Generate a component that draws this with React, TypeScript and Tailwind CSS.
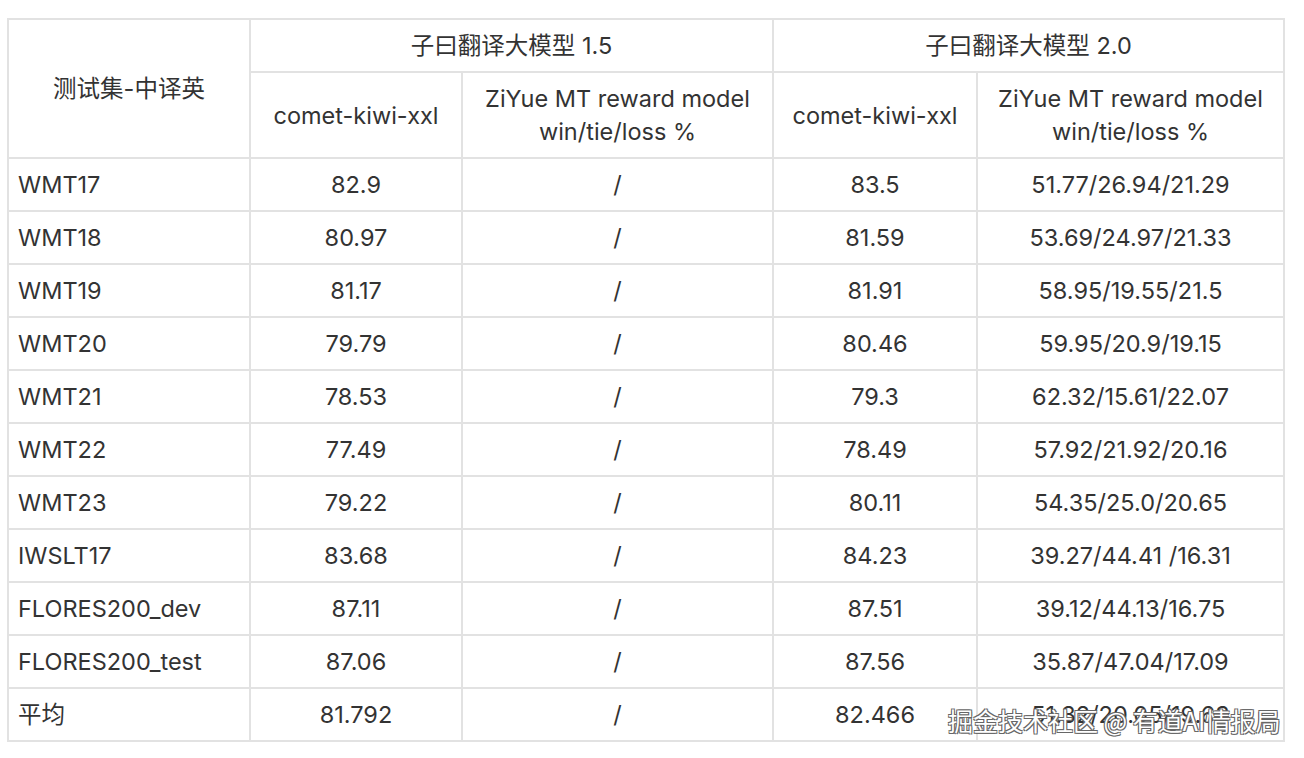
import React from 'react';

const rows: [string, string, string, string, string][] = [
  ['WMT17', '82.9', '/', '83.5', '51.77/26.94/21.29'],
  ['WMT18', '80.97', '/', '81.59', '53.69/24.97/21.33'],
  ['WMT19', '81.17', '/', '81.91', '58.95/19.55/21.5'],
  ['WMT20', '79.79', '/', '80.46', '59.95/20.9/19.15'],
  ['WMT21', '78.53', '/', '79.3', '62.32/15.61/22.07'],
  ['WMT22', '77.49', '/', '78.49', '57.92/21.92/20.16'],
  ['WMT23', '79.22', '/', '80.11', '54.35/25.0/20.65'],
  ['IWSLT17', '83.68', '/', '84.23', '39.27/44.41 /16.31'],
  ['FLORES200_dev', '87.11', '/', '87.51', '39.12/44.13/16.75'],
  ['FLORES200_test', '87.06', '/', '87.56', '35.87/47.04/17.09'],
  ['平均', '81.792', '/', '82.466', '51.32/20.05/19.63'],
];

const cell = 'border-2 border-[#e2e2e2] px-[9px] h-[53px] leading-[33px]';

export default function App() {
  return (
    <div className="relative w-[1304px] h-[758px] bg-white text-[#333] text-[23.5px] font-['Inter','Noto_Sans_CJK_SC',sans-serif]">
      <div className="pt-[18px] pl-[7px]">
        <table className="border-collapse table-fixed w-[1276px]">
          <colgroup>
            <col className="w-[242px]" />
            <col className="w-[212px]" />
            <col className="w-[311px]" />
            <col className="w-[204px]" />
            <col className="w-[307px]" />
          </colgroup>
          <thead>
            <tr>
              <th rowSpan={2} className={`${cell} font-normal text-center`}>
                测试集-中译英
              </th>
              <th colSpan={2} className={`${cell} font-normal text-center`}>
                子曰翻译大模型 1.5
              </th>
              <th colSpan={2} className={`${cell} font-normal text-center`}>
                子曰翻译大模型 2.0
              </th>
            </tr>
            <tr>
              <th className={`${cell} h-[86px] font-normal text-center`}>comet-kiwi-xxl</th>
              <th className={`${cell} h-[86px] font-normal text-center`}>
                ZiYue MT reward model
                <br />
                win/tie/loss %
              </th>
              <th className={`${cell} h-[86px] font-normal text-center`}>comet-kiwi-xxl</th>
              <th className={`${cell} h-[86px] font-normal text-center`}>
                ZiYue MT reward model
                <br />
                win/tie/loss %
              </th>
            </tr>
          </thead>
          <tbody>
            {rows.map((r) => (
              <tr key={r[0]}>
                <td className={`${cell} text-left`}>{r[0]}</td>
                <td className={`${cell} text-center`}>{r[1]}</td>
                <td className={`${cell} text-center`}>{r[2]}</td>
                <td className={`${cell} text-center`}>{r[3]}</td>
                <td className={`${cell} text-center`}>{r[4]}</td>
              </tr>
            ))}
          </tbody>
        </table>
      </div>

      {/* watermark */}
      <div className="absolute left-[948px] top-[703px] text-[25px] leading-[34px] text-white whitespace-nowrap font-['Noto_Sans_CJK_SC',sans-serif] [text-shadow:1px_1px_0_#666,-1px_-1px_0_#666,1px_-1px_0_#666,-1px_1px_0_#666]">
        掘金技术社区 @ 有道AI情报局
      </div>
    </div>
  );
}
